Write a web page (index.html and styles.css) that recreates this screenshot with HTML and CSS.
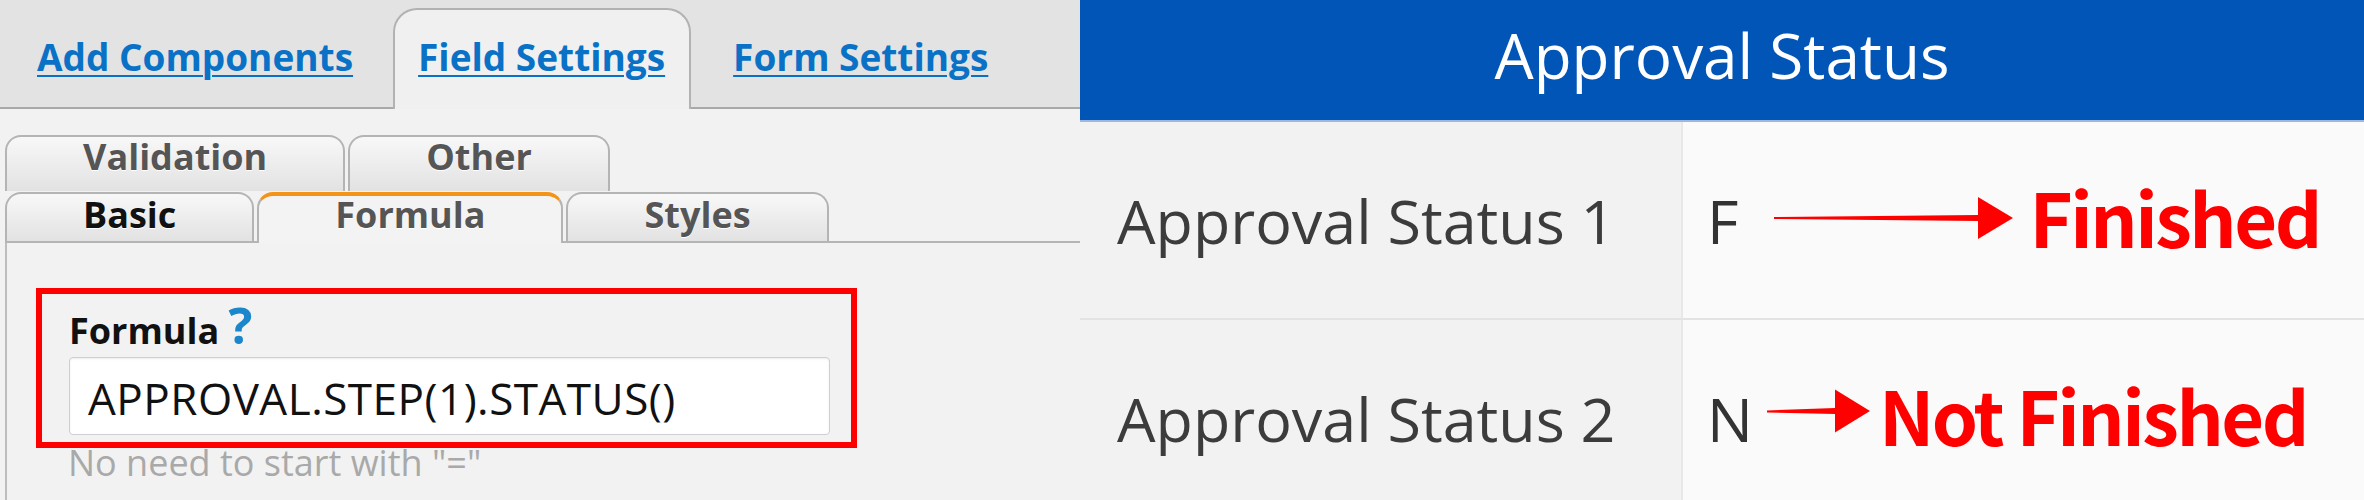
FILE: index.html
```html
<!DOCTYPE html>
<html lang="en">
<head>
<meta charset="utf-8">
<title>Approval Status Formula</title>
<link rel="stylesheet" href="styles.css">
</head>
<body>
<div class="page">
  <section class="editor">
    <nav class="tabbar">
      <div class="tab"><a href="#">Add Components</a></div>
      <div class="tab tab-active"><a href="#">Field Settings</a></div>
      <div class="tab"><a href="#">Form Settings</a></div>
    </nav>
    <div class="subtabs">
      <div class="subrow subrow-top">
        <div class="subtab">Validation</div>
        <div class="subtab">Other</div>
      </div>
      <div class="subrow subrow-bottom">
        <div class="subtab subtab-dark">Basic</div>
        <div class="subtab subtab-active">Formula</div>
        <div class="subtab">Styles</div>
      </div>
    </div>
    <div class="content">
      <div class="highlight">
        <div class="field-label">Formula <span class="help">?</span></div>
        <div class="field-input">APPROVAL.STEP(1).STATUS()</div>
      </div>
      <div class="hint">No need to start with "="</div>
    </div>
  </section>
  <section class="status">
    <header class="status-head">Approval Status</header>
    <div class="status-row">
      <div class="status-name">Approval Status 1</div>
      <div class="status-value">
        <span class="code">F</span>
        <svg class="arrow arrow-long" viewBox="0 0 239 44" aria-hidden="true"><path d="M0 21 L204 19 L204 1 L239 22 L204 43 L204 25 L0 23 Z" fill="#ff0000"/></svg>
        <span class="note">Finished</span>
      </div>
    </div>
    <div class="status-row">
      <div class="status-name">Approval Status 2</div>
      <div class="status-value">
        <span class="code">N</span>
        <svg class="arrow arrow-short" viewBox="0 0 103 44" aria-hidden="true"><path d="M0 21.5 L68 19 L68 0.5 L103 22 L68 43.5 L68 25 L0 23.5 Z" fill="#ff0000"/></svg>
        <span class="note">Not Finished</span>
      </div>
    </div>
  </section>
</div>
</body>
</html>
```

FILE: styles.css
```css
* { box-sizing: border-box; margin: 0; padding: 0; }
html, body { width: 2364px; height: 500px; overflow: hidden; background: #ffffff; }
body { font-family: "Open Sans", "Noto Sans", sans-serif; }

.page { display: flex; height: 500px; }

/* ---------- left: form editor ---------- */
.editor { width: 1080px; flex: none; background: #f2f2f2; display: flex; flex-direction: column; }

.tabbar {
  height: 109px; padding-top: 8px; background: #e3e3e3;
  border-bottom: 2px solid #a9a9a9; display: flex; align-items: flex-start;
}
.tab {
  height: 99px; padding: 30px 40px 0 37px;
  font-size: 37px; font-weight: 700; line-height: 37px;
}
.tab a {
  color: #0a72c6; text-decoration: underline;
  text-decoration-thickness: 2px; text-underline-offset: 4px;
}
.tab-active {
  height: 101px; margin-bottom: -2px; padding: 28px 24px 0 23px;
  background: #f0f0f0; border: 2px solid #b2b2b2; border-bottom: 0;
  border-radius: 24px 24px 0 0;
}
.tab-active + .tab { padding-left: 42px; }

.subtabs { padding: 26px 0 0 5px; }
.subrow { display: flex; align-items: flex-end; gap: 3px; }
.subrow-top .subtab { height: 56px; padding-top: 2px; }
.subrow-bottom { margin-top: 1px; border-bottom: 2px solid #b5b5b5; }
.subrow-bottom .subtab { height: 49px; padding-top: 3px; }

.subtab {
  padding: 2px 76px 0; border: 2px solid #b4b4b4; border-bottom: 0;
  border-radius: 16px 16px 0 0;
  background: linear-gradient(#f8f8f8, #e2e2e2);
  font-size: 36px; font-weight: 700; line-height: 36px; color: #555555;
  text-shadow: 0 1px 0 #ffffff;
}
.subtab-dark { color: #111111; }
.subrow-bottom .subtab-active {
  height: 51px; margin-bottom: -2px; padding-top: 1px;
  background: #f3f3f3; border-top: 4px solid #f39418;
}

.content {
  flex: 1; margin-left: 5px; border-left: 2px solid #bdbdbd;
  padding: 45px 0 0 29px;
}
.highlight {
  width: 821px; border: 6px solid #ff0000; padding: 17px 0 7px 27px;
}
.field-label {
  font-size: 36px; font-weight: 700; line-height: 40px; color: #111111;
}
.help { color: #1a86cc; font-size: 50px; font-weight: 700; line-height: 0; }
.field-input {
  width: 761px; height: 78px; margin-top: 6px; padding: 4px 0 0 18px;
  background: #ffffff; border: 1px solid #cfcfcf; border-radius: 4px;
  box-shadow: inset 0 1px 2px rgba(0, 0, 0, 0.08);
  font-size: 44px; letter-spacing: 0.5px; line-height: 72px; color: #111111;
}
.hint {
  margin-left: 32px; font-size: 36px; line-height: 30px; color: #a9a9a9;
}

/* ---------- right: approval status table ---------- */
.status { flex: 1; background: #fafafa; }
.status-head {
  height: 122px; padding-bottom: 10px; background: #0055b7;
  border-bottom: 2px solid #9bb8e0; color: #ffffff;
  font-size: 62px; line-height: 110px; text-align: center;
}
.status-row { display: flex; height: 198px; border-bottom: 2px solid #e3e3e3; }
.status-name {
  width: 603px; flex: none; background: #f2f2f2; border-right: 2px solid #e8e8e8;
  padding-left: 37px; display: flex; align-items: center;
  font-size: 61px; color: #3c3c3c;
}
.status-value {
  flex: 1; display: flex; align-items: center; padding-left: 24px;
  font-size: 61px; color: #333333;
}
.arrow { height: 44px; flex: none; }
.arrow-long { width: 239px; margin: -4px 16px 0 36px; }
.arrow-short { width: 103px; margin: -14px 9px 0 14px; }
.note {
  margin-top: -10px;
  font-family: "Noto Sans CJK TC", "Open Sans", sans-serif;
  font-weight: 700; font-size: 74px; letter-spacing: -2.5px; color: #ff0000;
}
```
